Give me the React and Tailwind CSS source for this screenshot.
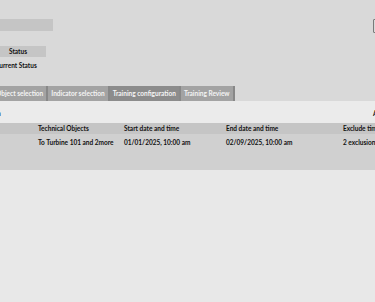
const tabs = [
  { label: 'Object selection', active: false },
  { label: 'Indicator selection', active: false },
  { label: 'Training configuration', active: true },
  { label: 'Training Review', active: false },
];

const columns = [
  { key: 'name', header: '', width: 'w-[38px]' },
  { key: 'objects', header: 'Technical Objects', width: 'w-[86px]' },
  { key: 'start', header: 'Start date and time', width: 'w-[102px]' },
  { key: 'end', header: 'End date and time', width: 'w-[117px]' },
  { key: 'exclude', header: 'Exclude time', width: 'w-[80px]' },
];

const row = {
  name: '',
  objects: 'To Turbine 101 and 2more',
  start: '01/01/2025, 10:00 am',
  end: '02/09/2025, 10:00 am',
  exclude: '2 exclusions',
};

export default function App() {
  return (
    <div className="h-[302px] w-[375px] overflow-hidden bg-[#e8e8e8] font-['Lato','Liberation_Sans',sans-serif] text-[6.5px] font-bold text-[#111111]">
      <div className="h-[101px] bg-[#d9d9d9] pt-[19px]">
        <div className="flex items-start justify-between">
          <div className="h-[12px] w-[53px] bg-[#c5c5c5]" />
          <div className="-mr-[8px] h-[14px] w-[10px] rounded-[1px] border border-[#7a7a7a] bg-[#d9d9d9]" />
        </div>

        <div className="-ml-[10px] mt-[13px] flex h-[11px] w-[56px] items-center justify-center bg-[#c5c5c5]">
          Status
        </div>
        <div className="-ml-[5px] mt-[4px] leading-[9px]">Current Status</div>

        <div className="-ml-[7px] mt-[16px] flex h-[15px]">
          {tabs.map((tab) => (
            <div
              key={tab.label}
              className={`flex items-center border-r-2 border-[#888888] px-[3px] text-[#f4f4f4] ${
                tab.active ? 'bg-[#8c8c8c]' : 'bg-[#a3a3a3]'
              }`}
            >
              {tab.label}
            </div>
          ))}
        </div>
      </div>

      <div className="flex h-[22px] items-end justify-between bg-[#ebebeb] pb-[5px] leading-[8px]">
        <span className="-ml-[3px]">n</span>
        <span className="-mr-[20px]">Actions</span>
      </div>

      <div className="flex h-[11px] w-[420px] items-center bg-[#c5c5c5]">
        {columns.map((col) => (
          <div key={col.key} className={`${col.width} shrink-0 whitespace-nowrap`}>
            {col.header}
          </div>
        ))}
      </div>
      <div className="flex h-[36px] w-[420px] items-start bg-[#d0d0d0] pt-[4px]">
        {columns.map((col) => (
          <div key={col.key} className={`${col.width} shrink-0 whitespace-nowrap`}>
            {row[col.key]}
          </div>
        ))}
      </div>
    </div>
  );
}
